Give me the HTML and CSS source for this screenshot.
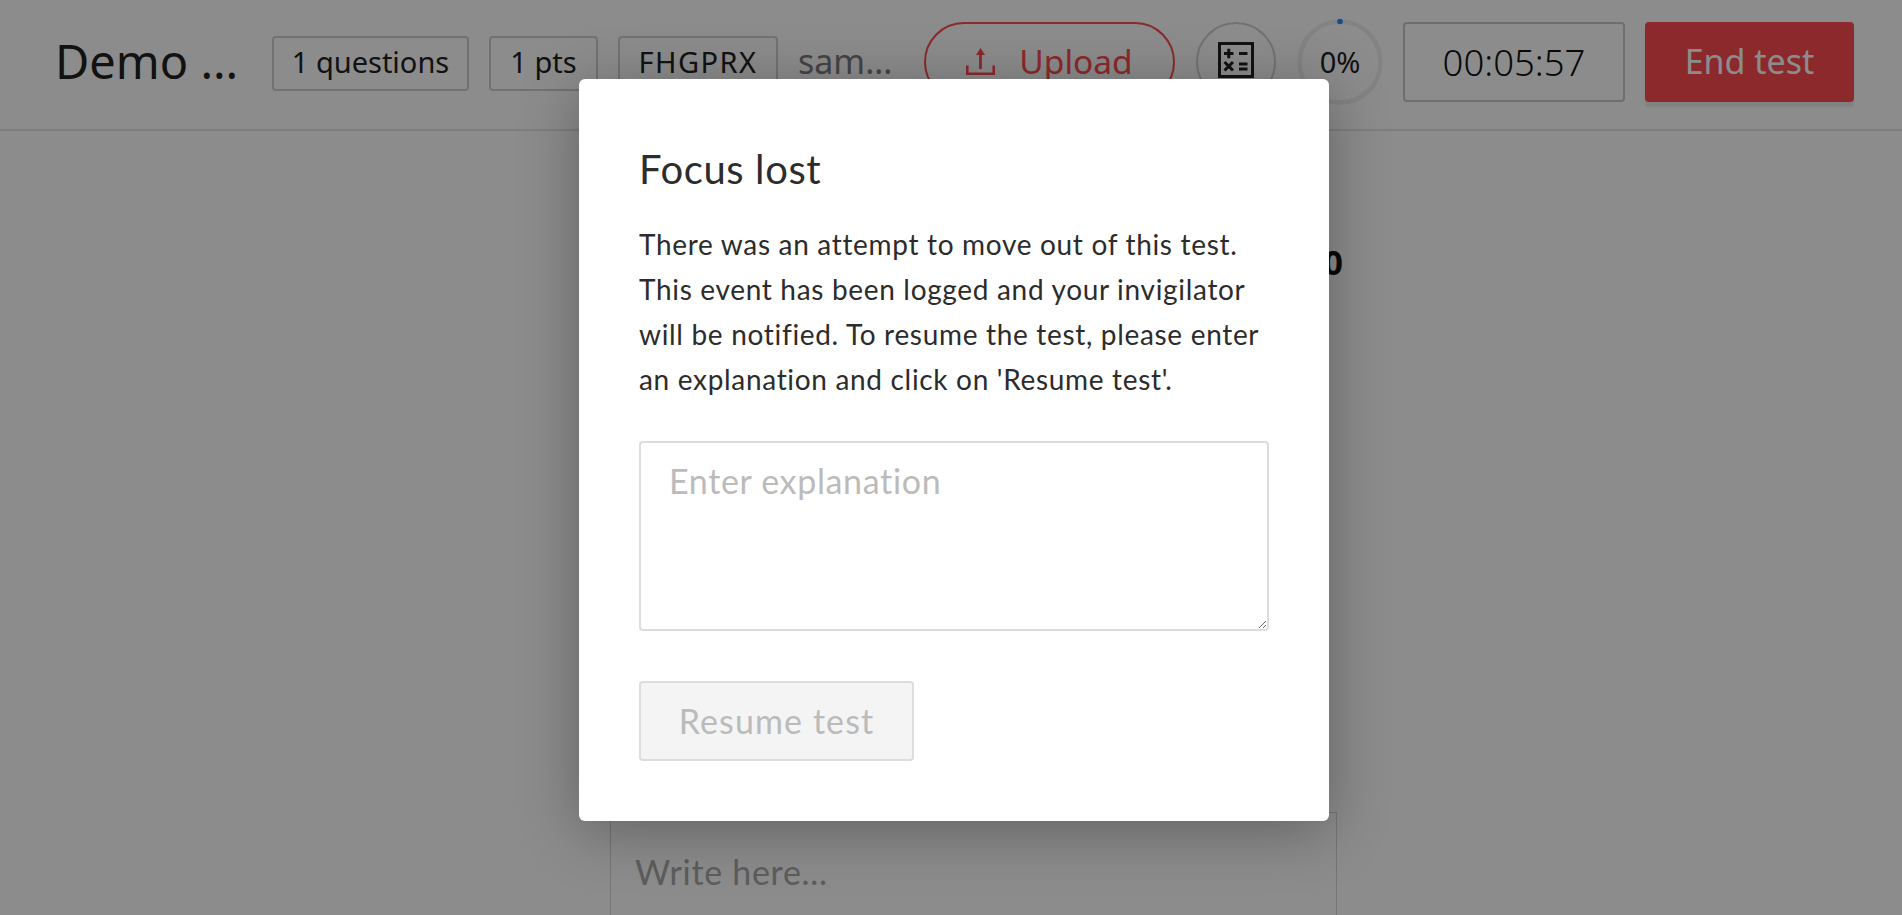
FILE: index.html
```html
<!DOCTYPE html>
<html lang="en">
<head>
<meta charset="utf-8">
<title>Test</title>
<link rel="stylesheet" href="styles.css">
</head>
<body>
<header class="topbar">
  <h1 class="title">Demo ...</h1>
  <span class="chip chip-q">1 questions</span>
  <span class="chip chip-p">1 pts</span>
  <span class="chip chip-c">FHGPRX</span>
  <span class="user">sam...</span>
  <button class="upload">
    <svg class="upload-icon" viewBox="0 0 29 27" aria-hidden="true"><path d="M14.5 0 10 7h3.100v14h2.800V7H19z" fill="#fe4c50"/><path d="M1.300 17.500v8.200h26.400v-8.200" fill="none" stroke="#fe4c50" stroke-width="2.600"/></svg>
    Upload
  </button>
  <span class="calc">
    <svg class="calc-icon" viewBox="0 0 36 36" aria-hidden="true"><rect x="1.500" y="1.500" width="33" height="33" fill="none" stroke="#222" stroke-width="3"/><path d="M6 11.500h9.500M10.750 6.750v9.500M21 11.500h8.500M6.500 20l8.500 8.500M15 20l-8.500 8.500M21 22h8.500M21 27h8.500" fill="none" stroke="#222" stroke-width="3"/></svg>
  </span>
  <span class="progress">
    <svg class="progress-ring" viewBox="0 0 88 88" aria-hidden="true"><circle cx="44" cy="44" r="40.500" fill="none" stroke="#efefef" stroke-width="4.500"/><circle cx="44" cy="3.500" r="2.800" fill="#1f8cff"/></svg>
    <span class="progress-label">0%</span>
  </span>
  <span class="timer">00:05:57</span>
  <button class="end">End test</button>
</header>
<main class="content">
  <div class="question"><span class="stray">0</span></div>
  <div class="editor">Write here...</div>
</main>
<div class="overlay"></div>
<section class="modal">
  <h2 class="modal-title">Focus lost</h2>
  <p class="modal-text">There was an attempt to move out of this test.<br>This event has been logged and your invigilator<br>will be notified. To resume the test, please enter<br>an explanation and click on 'Resume test'.</p>
  <textarea class="explain" placeholder="Enter explanation"></textarea>
  <button class="resume" disabled>Resume test</button>
</section>
</body>
</html>
```
FILE: styles.css
```css
* { box-sizing: border-box; }
html, body { margin: 0; height: 915px; overflow: hidden; }
body { background: #fff; font-family: "Noto Sans", sans-serif; color: #222; position: relative; }
.topbar { height: 131px; border-bottom: 2px solid #e6e6e6; display: flex; align-items: center; padding: 0 48px 5px 55px; }
.title { font-size: 47px; font-weight: 400; margin: 0 36px 3px 0; width: 181px; white-space: nowrap; }
.chip { height: 55px; border: 2px solid #d0d0d0; border-radius: 4px; display: flex; align-items: center; justify-content: center; font-size: 29px; margin: 2px 20px 0 0; padding-bottom: 3px; }
.chip-q { width: 197px; }
.chip-p { width: 109px; }
.chip-c { width: 160px; letter-spacing: 1.500px; }
.user { font-size: 34px; color: #7c7c7c; width: 90px; margin: 0 36px 3px 0; white-space: nowrap; }
button { font-family: inherit; }
.upload { width: 251px; height: 80px; border: 2px solid #fe4c50; border-radius: 40px; background: #fff; color: #fe4c50; font-size: 33.500px; display: flex; align-items: center; justify-content: center; gap: 24px; margin-right: 21px; padding: 0 0 2px; }
.upload-icon { width: 29px; height: 27px; }
.calc { width: 80px; height: 80px; border: 2px solid #d0d0d0; border-radius: 50%; display: flex; align-items: center; justify-content: center; margin-right: 20px; }
.calc-icon { width: 36px; height: 36px; margin-bottom: 5px; }
.progress { width: 88px; height: 88px; position: relative; display: flex; align-items: center; justify-content: center; margin-right: 19px; }
.progress-ring { position: absolute; inset: 0; }
.progress-label { font-size: 29px; padding-bottom: 2px; }
.timer { width: 222px; height: 80px; border: 2px solid #c8c8c8; border-radius: 4px; display: flex; align-items: center; justify-content: center; font-size: 36.500px; font-weight: 300; color: #111; margin-right: 20px; }
.end { width: 209px; height: 80px; border: 0; border-radius: 4px; background: #fe4c50; color: #fff; font-size: 34px; box-shadow: 0 5px 2px rgba(0,0,0,.08); padding: 0 0 2px; }
.content { display: flex; flex-direction: column; align-items: flex-start; padding-left: 610px; }
.question { width: 727px; height: 681px; display: flex; justify-content: flex-end; align-items: flex-start; padding-top: 108px; }
.stray { font-size: 34px; font-weight: 700; color: #111; margin-right: -6px; }
.editor { width: 727px; height: 103px; border: 1px solid #d8d8d8; border-bottom: 0; padding: 38px 24px 0; font-family: "Lato", sans-serif; font-size: 34px; letter-spacing: .7px; color: #aaa; }
.overlay { position: absolute; inset: 0; background: rgba(0,0,0,.45); }
.modal { position: absolute; left: 579px; top: 79px; width: 750px; height: 742px; background: #fff; border-radius: 6px; padding: 63px 60px 0; box-shadow: 0 10px 60px rgba(0,0,0,.3); font-family: "Lato", sans-serif; color: #2c2c2c; }
.modal-title { font-size: 40px; font-weight: 400; letter-spacing: .6px; margin: 0 0 25px; line-height: 55px; }
.modal-text { font-size: 28px; letter-spacing: .68px; line-height: 45px; margin: 0 0 39px; }
.explain { display: block; width: 630px; height: 190px; border: 2px solid #ddd; border-radius: 4px; padding: 17px 28px; font-family: inherit; font-size: 34px; letter-spacing: .65px; outline: 0; margin-bottom: 50px; }
.explain::placeholder { color: #bbb; opacity: 1; }
.resume { display: block; width: 275px; height: 80px; border: 2px solid #ddd; border-radius: 4px; background: #f4f4f4; color: #bbb; font-family: inherit; font-size: 34px; letter-spacing: 1.100px; padding: 0 0 2px; }
```
